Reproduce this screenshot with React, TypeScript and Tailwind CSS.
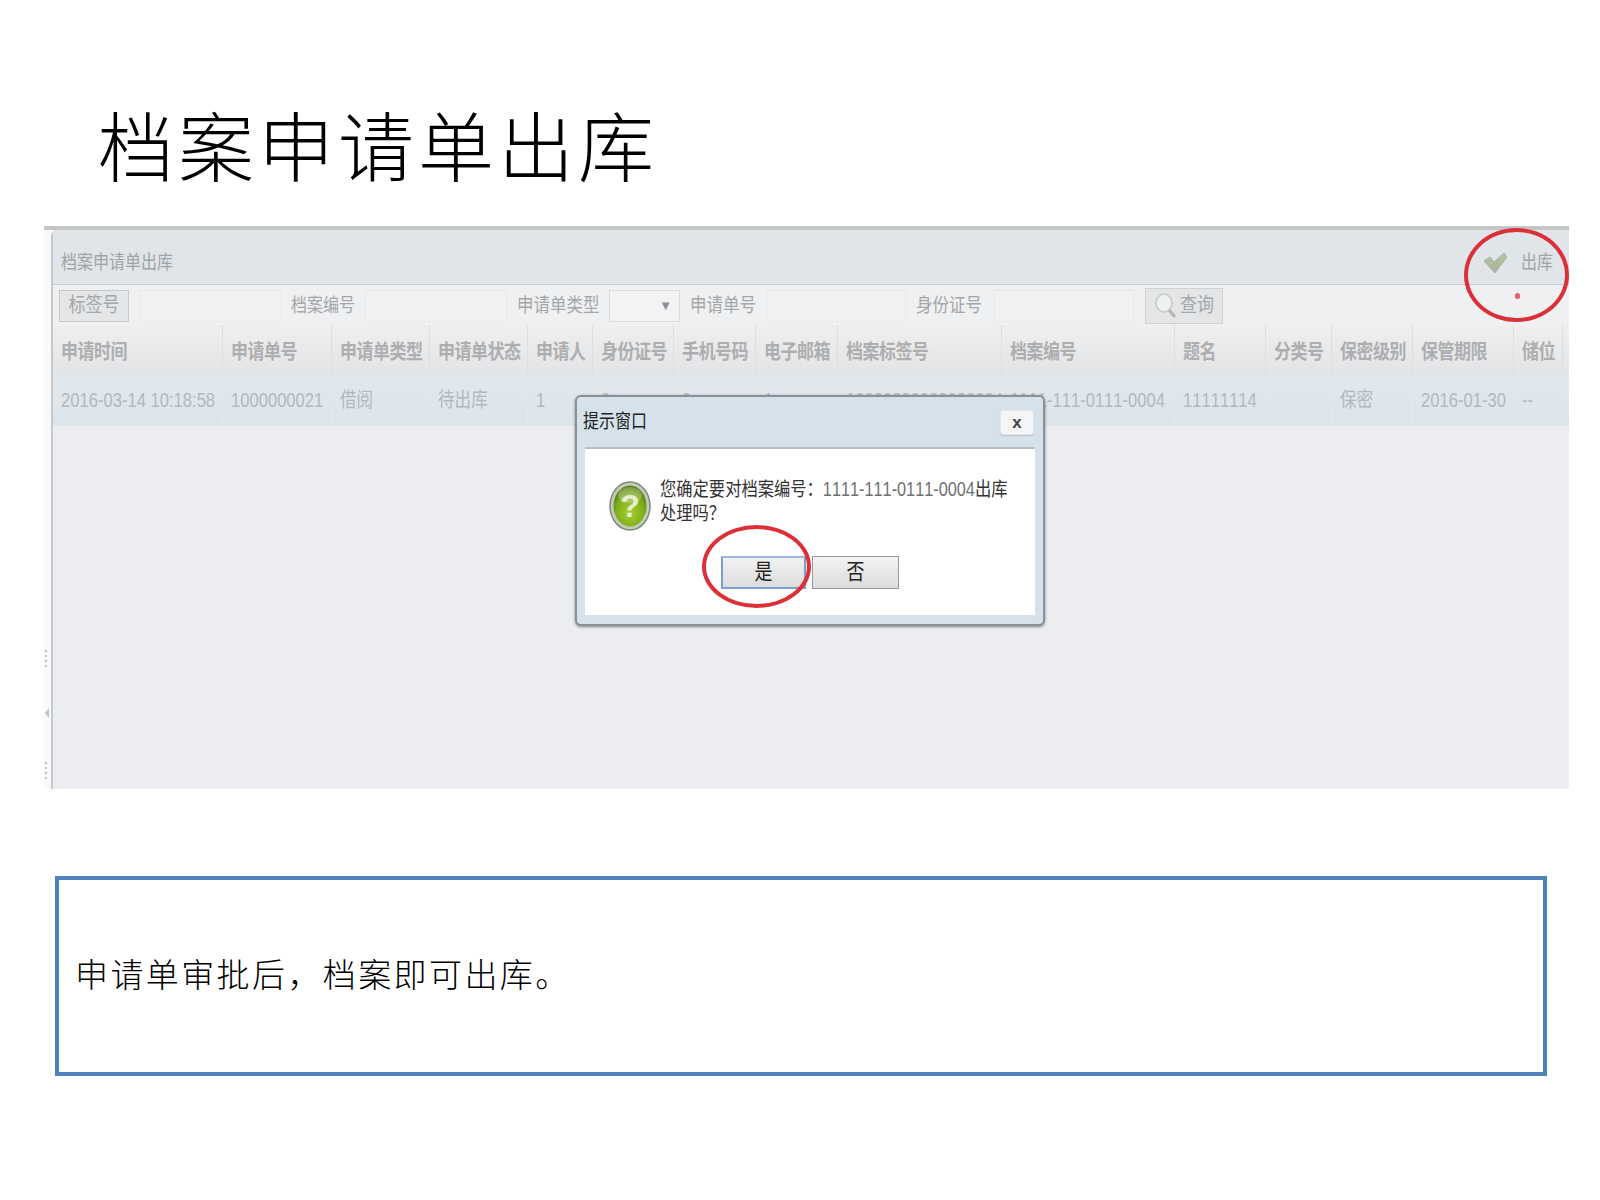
const FONT = '"Liberation Sans", "Noto Sans CJK SC", sans-serif';

const columns = [
  { title: '申请时间', value: '2016-03-14 10:18:58' },
  { title: '申请单号', value: '1000000021' },
  { title: '申请单类型', value: '借阅' },
  { title: '申请单状态', value: '待出库' },
  { title: '申请人', value: '1' },
  { title: '身份证号', value: '0' },
  { title: '手机号码', value: '0' },
  { title: '电子邮箱', value: '1' },
  { title: '档案标签号', value: '10000000000000004' },
  { title: '档案编号', value: '1111-111-0111-0004' },
  { title: '题名', value: '11111114' },
  { title: '分类号', value: '' },
  { title: '保密级别', value: '保密' },
  { title: '保管期限', value: '2016-01-30' },
  { title: '储位', value: '--' },
  { title: '', value: '' },
];

const gridCols =
  'grid grid-cols-[170px_109px_98px_98px_65px_81px_82px_82px_164px_173px_91px_66px_81px_101px_49px_1fr]';

function Tall({ children, className = '' }: { children: React.ReactNode; className?: string }) {
  return <span className={`inline-block scale-y-[1.2] whitespace-nowrap ${className}`}>{children}</span>;
}

function Field({ width }: { width: string }) {
  return <div className={`h-[32px] bg-[#f0f1f3] border border-[#e9eaec] border-t-[#e2e3e5] ${width}`} />;
}

function QuestionIcon() {
  return (
    <svg width="42" height="50" viewBox="0 0 42 50" className="shrink-0">
      <defs>
        <radialGradient id="ball" cx="50%" cy="65%" r="60%">
          <stop offset="0%" stopColor="#a6cf2c" />
          <stop offset="70%" stopColor="#7fae1c" />
          <stop offset="100%" stopColor="#567f12" />
        </radialGradient>
      </defs>
      <ellipse cx="21" cy="25" rx="20" ry="24" fill="#c4cbbd" stroke="#7d8a78" strokeWidth="1.5" />
      <ellipse cx="21" cy="25" rx="16.5" ry="20.5" fill="url(#ball)" />
      <ellipse cx="21" cy="14" rx="12" ry="8" fill="#ffffff" opacity="0.25" />
      <text x="21" y="36" textAnchor="middle" fontSize="32" fontWeight="700" fill="#e8efd0" fontFamily="Liberation Sans, sans-serif">
        ?
      </text>
    </svg>
  );
}

function Dialog() {
  return (
    <div className="absolute left-[531px] top-[169px] w-[470px] h-[231px] rounded-[6px] bg-[#d5e2ec] border-2 border-[#8b9196] shadow-[0_1px_3px_rgba(0,0,0,0.45)] flex flex-col px-[8px] pb-[9px]">
      <div className="h-[50px] shrink-0 flex items-center justify-between -ml-[2px] -mr-[2px] pr-[3px] text-[16px] text-[#222]">
        <Tall>提示窗口</Tall>
        <div className="w-[34px] h-[25px] mt-[1px] rounded-[3px] bg-[#f4f5f6] border border-[#e4e7ea] flex items-center justify-center text-[17px] font-bold text-[#444] shadow-[0_1px_1px_rgba(0,0,0,0.15)]">
          x
        </div>
      </div>
      <div className="flex-1 bg-white border-t-2 border-[#b8c0c6] flex flex-col items-center">
        <div className="flex w-full pl-[24px] pt-[32px] gap-[9px]">
          <QuestionIcon />
          <div className="text-[16.3px] leading-[24px] text-[#333] -mt-[4px]">
            <Tall>
              您确定要对档案编号：<span className="text-[#6d7270]">1111-111-0111-0004</span>出库
            </Tall>
            <br />
            <Tall>处理吗？</Tall>
          </div>
        </div>
        <div className="flex gap-[6px] mt-[25px]">
          <div className="w-[85px] h-[33px] border-2 border-[#7ba0d0] border-t-[#9db8da] bg-gradient-to-b from-[#f2f2f2] to-[#dcdcdc] flex items-center justify-center text-[18px] text-[#222]">
            <Tall>是</Tall>
          </div>
          <div className="w-[87px] h-[33px] border border-[#9a9a9a] bg-gradient-to-b from-[#f2f2f2] to-[#dcdcdc] flex items-center justify-center text-[18px] text-[#222]">
            <Tall>否</Tall>
          </div>
        </div>
      </div>
    </div>
  );
}

function Screenshot() {
  return (
    <div className="relative ml-[44px] w-[1525px] h-[563px] flex flex-col">
      <div className="h-[4px] shrink-0 bg-[#c4c6c5]" />
      <div className="flex flex-1 min-h-0">
        <div className="relative w-[7px] shrink-0 bg-[#f9f9fa] flex flex-col items-start pt-[420px] pl-[1px] gap-[3px]">
          {[0, 1, 2, 3].map((i) => (
            <div key={i} className="w-[2px] h-[2px] bg-[#c0c2c4]" />
          ))}
          <div className="mt-[38px] w-0 h-0 border-y-[5px] border-y-transparent border-r-[4px] border-r-[#c0c2c4]" />
          <div className="mt-[41px] w-[2px] h-[2px] bg-[#c0c2c4]" />
          {[0, 1, 2].map((i) => (
            <div key={i} className="w-[2px] h-[2px] bg-[#c0c2c4]" />
          ))}
        </div>
        <div className="flex-1 min-w-0 flex flex-col bg-[#ebedf0] border-l-2 border-[#c6c9cb] rounded-tl-[6px]">
          <div className="h-[55px] shrink-0 bg-[#dfe5e9] border-b border-[#c9cdcf] flex items-center justify-between pl-[8px] pr-[16px] pt-[11px] text-[#a0a4a6] text-[16px]">
            <Tall>档案申请单出库</Tall>
            <div className="flex items-center gap-[14px]">
              <svg width="24" height="22" viewBox="0 0 24 22">
                <defs>
                  <linearGradient id="tick" x1="0" y1="0" x2="0" y2="1">
                    <stop offset="0%" stopColor="#a8cfa0" />
                    <stop offset="100%" stopColor="#b7a99c" />
                  </linearGradient>
                </defs>
                <path d="M1 9 L7 5 L11 10 L21 1 L24 5 L12 21 Z" fill="url(#tick)" stroke="#a9b5a4" strokeWidth="1" />
              </svg>
              <Tall>出库</Tall>
            </div>
          </div>
          <div className="h-[40px] shrink-0 bg-[#eff0f2] flex items-center pl-[6px] pt-[1px] text-[#a4a7a9] text-[16.5px]">
            <div className="w-[70px] h-[32px] bg-[#e5e6e7] border border-[#c9cacb] flex items-center justify-center text-[17px]">
              <Tall>标签号</Tall>
            </div>
            <div className="w-[11px]" />
            <Field width="w-[141px]" />
            <div className="w-[84px] pl-[10px] text-[16px]">
              <Tall>档案编号</Tall>
            </div>
            <Field width="w-[142px]" />
            <div className="w-[102px] pl-[10px]">
              <Tall>申请单类型</Tall>
            </div>
            <div className="w-[71px] h-[32px] bg-[#f2f3f4] border border-[#d9dadc] flex items-center justify-end pr-[7px] text-[13px] text-[#8d9092]">
              ▼
            </div>
            <div className="w-[87px] pl-[10px]">
              <Tall>申请单号</Tall>
            </div>
            <Field width="w-[139px]" />
            <div className="w-[88px] pl-[10px]">
              <Tall>身份证号</Tall>
            </div>
            <Field width="w-[140px]" />
            <div className="w-[11px]" />
            <div className="w-[78px] h-[36px] bg-[#e4e5e6] border border-[#cfd0d1] flex items-center gap-[2px] pl-[8px] text-[17px]">
              <svg width="24" height="26" viewBox="0 0 24 26" className="shrink-0">
                <ellipse cx="10" cy="10" rx="8" ry="9" fill="#eef1f2" stroke="#c5c9ca" strokeWidth="1.5" />
                <path d="M15 17 L21 24" stroke="#b1b8a9" strokeWidth="3" />
              </svg>
              <Tall>查询</Tall>
            </div>
          </div>
          <div className={`${gridCols} h-[50px] shrink-0 bg-gradient-to-b from-[#efefef] to-[#e3e4e6] border-b border-[#dfe0e2]`}>
            {columns.map((c, i) => (
              <div key={i} className="flex items-center pl-[8px] pt-[6px] border-r border-[#dddee0] text-[17px] font-bold text-[#acaeb0] last:border-r-0">
                <Tall className="tracking-[-0.5px]">{c.title}</Tall>
              </div>
            ))}
          </div>
          <div className={`${gridCols} h-[51px] shrink-0 bg-gradient-to-b from-[#e1e8ee] to-[#dce5ec]`}>
            {columns.map((c, i) => (
              <div key={i} className="flex items-center pl-[8px] pt-[2px] border-r border-[#e3e9ee] text-[16.6px] text-[#b3b8bb] last:border-r-0">
                <Tall>{c.value}</Tall>
              </div>
            ))}
          </div>
        </div>
      </div>

      <Dialog />
      <div className="absolute left-[1420px] top-[2px] w-[105px] h-[94px] rounded-[50%] border-4 border-[#dc3039]" />
      <div className="absolute left-[1471px] top-[67px] w-[5px] h-[6px] rounded-full bg-[#e8626c]" />
      <div className="absolute left-[658px] top-[299px] w-[109px] h-[83px] rounded-[50%] border-4 border-[#dc3039]" />
    </div>
  );
}

export default function App() {
  return (
    <div className="w-[1600px] h-[1200px] bg-white flex flex-col [font-kerning:none]" style={{ fontFamily: FONT }}>
      <div className="h-[226px] shrink-0 pl-[98px] pt-[95px]">
        <h1 className="text-[76px] leading-[110px] tracking-[4px] font-light text-black">档案申请单出库</h1>
      </div>
      <Screenshot />
      <div className="mt-[87px] ml-[55px] w-[1492px] h-[200px] border-4 border-[#4f81bd] flex items-center pl-[16px] text-[33px] tracking-[2.4px] font-light text-black">
        申请单审批后，档案即可出库。
      </div>
    </div>
  );
}
